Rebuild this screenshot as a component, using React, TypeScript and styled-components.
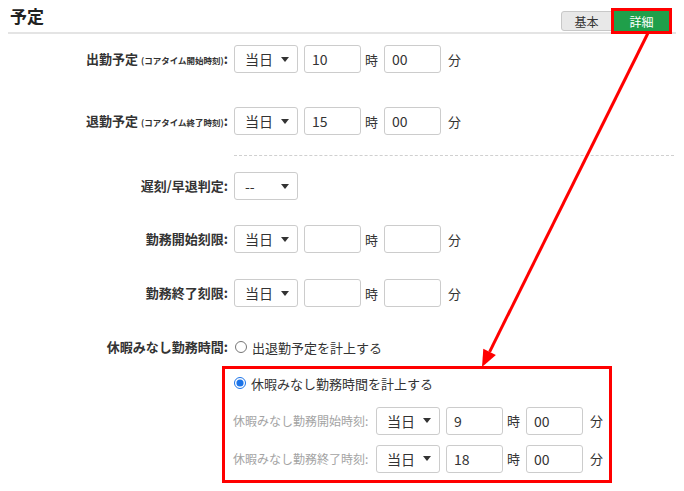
import React from "react";
import styled, { createGlobalStyle } from "styled-components";

const GlobalStyle = createGlobalStyle`
  html, body {
    margin: 0;
    padding: 0;
    background: #fff;
  }
  body {
    font-family: "Noto Sans CJK JP", "Noto Sans", sans-serif;
    color: #333;
  }
  * {
    box-sizing: border-box;
  }
`;

type TimeRow = {
  label: string;
  note?: string;
  day: string;
  hour: string;
  minute: string;
  top: number;
};

const scheduleRows: TimeRow[] = [
  { label: "出勤予定", note: "(コアタイム開始時刻)", day: "当日", hour: "10", minute: "00", top: 11 },
  { label: "退勤予定", note: "(コアタイム終了時刻)", day: "当日", hour: "15", minute: "00", top: 34 },
];

const limitRows: TimeRow[] = [
  { label: "勤務開始刻限", day: "当日", hour: "", minute: "", top: 25 },
  { label: "勤務終了刻限", day: "当日", hour: "", minute: "", top: 26 },
];

const holidayRows: TimeRow[] = [
  { label: "休暇みなし勤務開始時刻", day: "当日", hour: "9", minute: "00", top: 13 },
  { label: "休暇みなし勤務終了時刻", day: "当日", hour: "18", minute: "00", top: 9 },
];

const Caret = () => (
  <svg width="8" height="5" viewBox="0 0 8 5">
    <path d="M0 0 L8 0 L4 5 Z" fill="#333" />
  </svg>
);

const TimeControls = ({ row }: { row: TimeRow }) => (
  <>
    <SelectBox>
      <span>{row.day}</span>
      <Caret />
    </SelectBox>
    <NumberInput defaultValue={row.hour} readOnly />
    <Unit>時</Unit>
    <NumberInput defaultValue={row.minute} readOnly />
    <Unit $wide>分</Unit>
  </>
);

const App = () => {
  return (
    <>
      <GlobalStyle />
      <Page>
        <Header>
          <Title>予定</Title>
          <ModeGroup>
            <ModeButton>基本</ModeButton>
            <ModeButton $active>詳細</ModeButton>
          </ModeGroup>
        </Header>

        {scheduleRows.map((row) => (
          <Row key={row.label} $top={row.top}>
            <Label>
              {row.label}
              <Note>{row.note}</Note>:
            </Label>
            <TimeControls row={row} />
          </Row>
        ))}

        <Divider />

        <Row $top={16}>
          <Label>遅刻/早退判定:</Label>
          <SelectBox>
            <span>--</span>
            <Caret />
          </SelectBox>
        </Row>

        {limitRows.map((row) => (
          <Row key={row.label} $top={row.top}>
            <Label>{row.label}:</Label>
            <TimeControls row={row} />
          </Row>
        ))}

        <TextRow>
          <Label>休暇みなし勤務時間:</Label>
          <RadioLabel>
            <Radio type="radio" name="holiday" readOnly />
            出退勤予定を計上する
          </RadioLabel>
        </TextRow>

        <HighlightBox>
          <RadioLabel>
            <Radio type="radio" name="holiday" defaultChecked />
            休暇みなし勤務時間を計上する
          </RadioLabel>
          {holidayRows.map((row) => (
            <SubRow key={row.label} $top={row.top}>
              <SubLabel>{row.label}:</SubLabel>
              <TimeControls row={row} />
            </SubRow>
          ))}
        </HighlightBox>

        <ArrowLayer width="684" height="491" viewBox="0 0 684 491">
          <line x1="648" y1="33" x2="489.6" y2="351.8" stroke="#ff0000" strokeWidth="3" />
          <polygon points="482,367 495.9,354.9 483.3,348.7" fill="#ff0000" />
        </ArrowLayer>
      </Page>
    </>
  );
};

export default App;

const Page = styled.div`
  position: relative;
  width: 684px;
  height: 491px;
  padding: 0 8px;
  overflow: hidden;
`;

const Header = styled.div`
  display: flex;
  justify-content: space-between;
  align-items: flex-end;
  height: 34px;
  border-bottom: 2px solid #e4e4e4;
`;

const Title = styled.h2`
  margin: 0 0 5px 2px;
  font-size: 17px;
  font-weight: 700;
  line-height: 22px;
  color: #222;
`;

const ModeGroup = styled.div`
  display: flex;
  gap: 2px;
  margin: 0 7px 1px 0;
`;

const ModeButton = styled.div<{ $active?: boolean }>`
  display: flex;
  align-items: center;
  justify-content: center;
  width: ${(p) => (p.$active ? "55px" : "51px")};
  height: 20px;
  font-size: 12px;
  color: ${(p) => (p.$active ? "#fff" : "#333")};
  background: ${(p) => (p.$active ? "#1f9f4a" : "#e8e8e8")};
  border: 1px solid ${(p) => (p.$active ? "#1f9f4a" : "#c8c8c8")};
  border-radius: ${(p) => (p.$active ? "0" : "3px 0 0 3px")};
  outline: ${(p) => (p.$active ? "3px solid #ff0000" : "none")};
`;

const Row = styled.div<{ $top: number }>`
  display: flex;
  align-items: center;
  height: 28px;
  margin-top: ${(p) => p.$top}px;
  white-space: nowrap;

  & > * {
    flex-shrink: 0;
  }
`;

const Label = styled.div`
  width: 220px;
  margin-right: 6px;
  text-align: right;
  font-size: 13px;
  font-weight: 700;
  line-height: 18px;
  color: #333;
  white-space: nowrap;
`;

const Note = styled.span`
  margin-left: 3px;
  font-size: 8.5px;
`;

const SelectBox = styled.div`
  display: flex;
  align-items: center;
  justify-content: space-between;
  width: 64px;
  height: 28px;
  padding: 0 8px 0 10px;
  font-size: 14px;
  color: #333;
  white-space: nowrap;
  border: 1px solid #ccc;
  border-radius: 3px;
  background: #fff;
`;

const NumberInput = styled.input`
  width: 57px;
  height: 28px;
  margin-left: 6px;
  padding: 0 7px;
  font-family: inherit;
  font-size: 14px;
  color: #333;
  border: 1px solid #ccc;
  border-radius: 3px;
  outline: none;
`;

const Unit = styled.span<{ $wide?: boolean }>`
  margin-left: ${(p) => (p.$wide ? "7px" : "4px")};
  font-size: 13px;
  color: #333;
`;

const Divider = styled.div`
  margin: 20px 2px 0 226px;
  border-top: 1px dashed #d0d0d0;
`;

const TextRow = styled.div`
  display: flex;
  align-items: center;
  height: 20px;
  margin-top: 30px;
`;

const RadioLabel = styled.label`
  display: flex;
  align-items: center;
  height: 20px;
  font-size: 13px;
  color: #333;
`;

const Radio = styled.input`
  width: 12px;
  height: 12px;
  margin: 0 5px 0 1px;
  accent-color: #1a73e8;
`;

const HighlightBox = styled.div`
  width: 390px;
  height: 117px;
  margin: 9px 0 0 214px;
  padding: 4px 0 0 8px;
  border: 3px solid #ff0000;
`;

const SubRow = styled(Row)`
  height: 29px;
`;

const SubLabel = styled.div`
  width: 138px;
  margin-right: 5px;
  font-size: 12px;
  color: #a3a3a3;
  white-space: nowrap;
`;

const ArrowLayer = styled.svg`
  position: absolute;
  top: 0;
  left: 0;
  pointer-events: none;
`;
